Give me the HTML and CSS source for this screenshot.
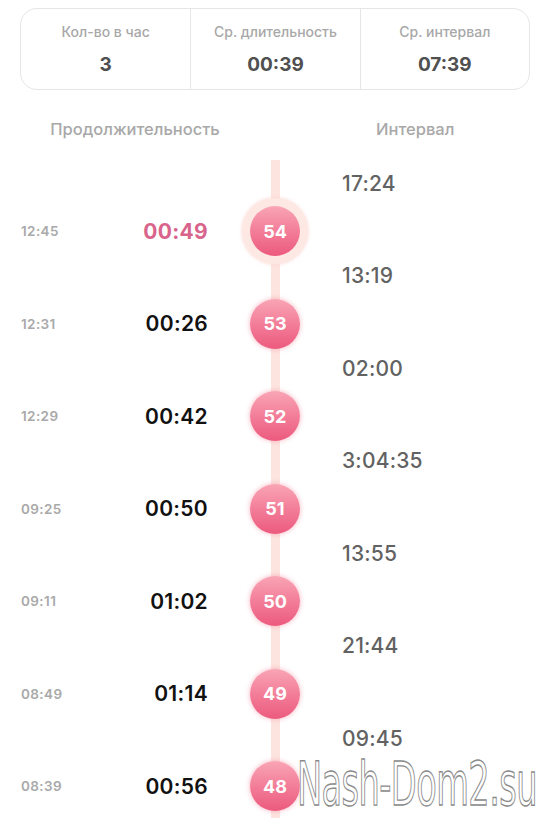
FILE: index.html
```html
<!DOCTYPE html>
<html lang="ru">
<head>
<meta charset="utf-8">
<link rel="stylesheet" href="styles.css">
</head>
<body>
<div class="page">
  <div class="stats">
    <div class="stat"><div class="stat-label">Кол-во в час</div><div class="stat-value">3</div></div>
    <div class="stat"><div class="stat-label">Ср. длительность</div><div class="stat-value">00:39</div></div>
    <div class="stat"><div class="stat-label">Ср. интервал</div><div class="stat-value">07:39</div></div>
  </div>
  <div class="heads">
    <div class="head head-left">Продолжительность</div>
    <div class="head head-right">Интервал</div>
  </div>
  <div class="timeline">
    <div class="row gap-row"><div></div><div></div><div class="interval">17:24</div></div>
    <div class="row event-row"><div class="left"><span class="clock">12:45</span><span class="dur dur-active">00:49</span></div><div class="mid"><span class="dot dot-active">54</span></div><div></div></div>
    <div class="row gap-row"><div></div><div></div><div class="interval">13:19</div></div>
    <div class="row event-row"><div class="left"><span class="clock">12:31</span><span class="dur">00:26</span></div><div class="mid"><span class="dot">53</span></div><div></div></div>
    <div class="row gap-row"><div></div><div></div><div class="interval">02:00</div></div>
    <div class="row event-row"><div class="left"><span class="clock">12:29</span><span class="dur">00:42</span></div><div class="mid"><span class="dot">52</span></div><div></div></div>
    <div class="row gap-row"><div></div><div></div><div class="interval">3:04:35</div></div>
    <div class="row event-row"><div class="left"><span class="clock">09:25</span><span class="dur">00:50</span></div><div class="mid"><span class="dot">51</span></div><div></div></div>
    <div class="row gap-row"><div></div><div></div><div class="interval">13:55</div></div>
    <div class="row event-row"><div class="left"><span class="clock">09:11</span><span class="dur">01:02</span></div><div class="mid"><span class="dot">50</span></div><div></div></div>
    <div class="row gap-row"><div></div><div></div><div class="interval">21:44</div></div>
    <div class="row event-row"><div class="left"><span class="clock">08:49</span><span class="dur">01:14</span></div><div class="mid"><span class="dot">49</span></div><div></div></div>
    <div class="row gap-row"><div></div><div></div><div class="interval">09:45</div></div>
    <div class="row event-row"><div class="left"><span class="clock">08:39</span><span class="dur">00:56</span></div><div class="mid"><span class="dot">48</span></div><div></div></div>
    <div class="row gap-row"><div></div><div></div><div></div></div>
  </div>
  <div class="watermark">Nash-Dom2.su</div>
</div>
</body>
</html>
```
FILE: styles.css
```css
html, body {
  margin: 0;
  padding: 0;
  background: #fff;
  overflow: hidden;
}
body {
  font-family: Inter, "Noto Sans", "Liberation Sans", sans-serif;
  width: 550px;
  height: 818px;
}
.page {
  position: relative;
  height: 818px;
  overflow: hidden;
}
.stats {
  margin: 8px 20px 0;
  height: 80px;
  border: 1px solid #e6e6e6;
  border-radius: 17px;
  display: grid;
  grid-template-columns: 1fr 1fr 1fr;
}
.stat {
  display: flex;
  flex-direction: column;
  align-items: center;
  border-left: 1px solid #e6e6e6;
}
.stat:first-child { border-left: none; }
.stat-label {
  margin-top: 14px;
  font-size: 14px;
  line-height: 18px;
  font-weight: 500;
  color: #a8a8a8;
}
.stat-value {
  margin-top: 13px;
  font-size: 19px;
  line-height: 22px;
  font-weight: 700;
  color: #505050;
}
.heads {
  display: grid;
  grid-template-columns: 270px 1fr;
  margin-top: 29px;
  height: 20px;
  line-height: 20px;
  font-size: 16.5px;
  font-weight: 500;
  color: #a8a8a8;
}
.head-left { text-align: center; }
.head-right { padding-left: 106px; }
.timeline {
  margin-top: 21px;
  background: linear-gradient(#fde4df, #fde4df) no-repeat 271px 0 / 9px 100%;
}
.row {
  display: grid;
  grid-template-columns: 250px 50px 1fr;
  height: 46.25px;
  align-items: center;
}
.interval {
  padding-left: 42px;
  font-size: 21px;
  font-weight: 500;
  color: #626262;
  letter-spacing: 0.2px;
}
.left {
  display: flex;
  justify-content: space-between;
  align-items: center;
  padding: 0 42px 0 21px;
}
.clock {
  font-size: 13.5px;
  font-weight: 600;
  color: #a9a9a9;
  letter-spacing: 0.4px;
}
.dur {
  font-size: 21px;
  font-weight: 600;
  color: #111;
  letter-spacing: 0.3px;
}
.dur-active {
  color: #d9648b;
  font-weight: 700;
}
.mid {
  display: flex;
  justify-content: center;
  align-items: center;
}
.dot {
  width: 50px;
  height: 50px;
  flex: none;
  border-radius: 50%;
  background: linear-gradient(180deg, #f9a5b5 0%, #f27a96 55%, #ec5a7e 100%);
  box-shadow: 0 0 4px 1px rgba(245, 140, 160, 0.45);
  color: #fff;
  font-size: 18px;
  font-weight: 700;
  display: flex;
  align-items: center;
  justify-content: center;
}
.dot-active {
  box-shadow: 0 0 0 8px #fde8e4, 0 0 3px 9px rgba(250, 210, 205, 0.6);
}
.watermark {
  position: absolute;
  left: 297px;
  top: 760px;
  font-family: "DejaVu Sans", sans-serif;
  font-size: 60px;
  line-height: 48px;
  color: #fff;
  -webkit-text-stroke: 1.4px #8a8a8a;
  letter-spacing: -1px;
  white-space: nowrap;
  transform: scaleX(0.56);
  transform-origin: 0 50%;
}
```
